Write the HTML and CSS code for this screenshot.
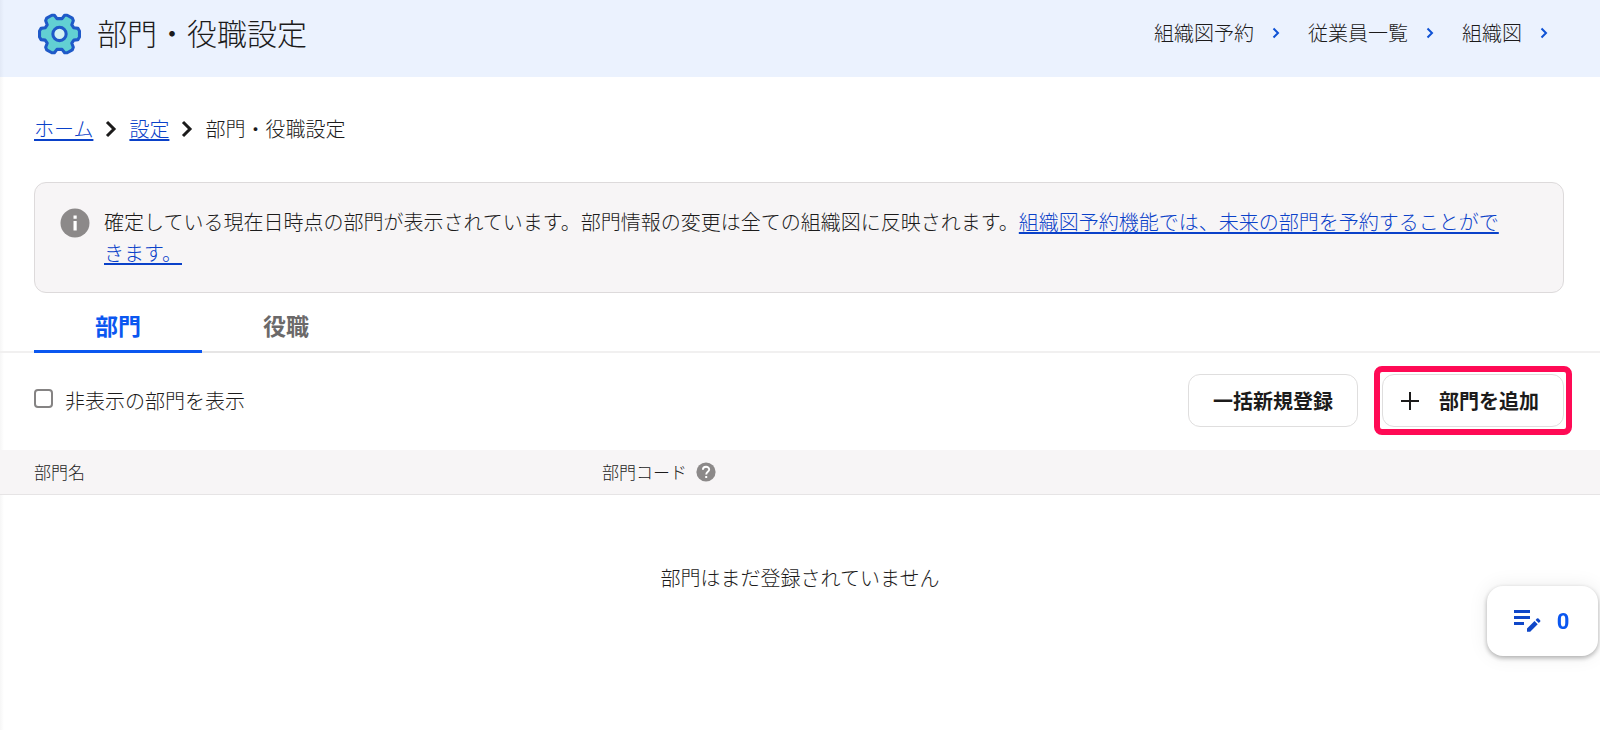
FILE: index.html
```
<!DOCTYPE html>
<html lang="ja">
<head>
    <meta charset="UTF-8">
    <meta name="viewport" content="width=device-width, initial-scale=1.0">
    <title>部門・役職設定</title>
    <link rel="stylesheet" href="styles.css">
</head>
<body>
    <header class="page-header">
        <div class="page-title">
            <svg class="gear" viewBox="0 0 42 42" aria-hidden="true">
                <path d="M13.500 2.200 L16 2.200 L18.500 5.500 L23.500 5.500 L26 2.200 L28.500 2.200 L33.500 5 L34.500 7.500 L33 11.500 L35 14.500 L39 15 L40.500 17.500 L40.500 23.500 L39 26 L35 26.500 L33 29.500 L34.500 33.500 L33.500 36 L28.500 38.800 L26 38.800 L23.500 35.500 L18.500 35.500 L16 38.800 L13.500 38.800 L8.500 36 L7.500 33.500 L9 29.500 L7 26.500 L3 26 L1.500 23.500 L1.500 17.500 L3 15 L7 14.500 L9 11.500 L7.500 7.500 L8.500 5 Z" fill="#62d0d3" stroke="#1f5ac8" stroke-width="3" stroke-linejoin="round"/>
                <circle cx="21" cy="20.500" r="6.500" fill="#d4f2f3" stroke="#1f5ac8" stroke-width="3"/>
            </svg>
            <h1>部門・役職設定</h1>
        </div>
        <nav class="header-links">
            <a href="#">組織図予約<svg viewBox="0 0 8 12" aria-hidden="true"><path d="M1.500 1.500 6 6l-4.500 4.500"/></svg></a>
            <a href="#">従業員一覧<svg viewBox="0 0 8 12" aria-hidden="true"><path d="M1.500 1.500 6 6l-4.500 4.500"/></svg></a>
            <a href="#">組織図<svg viewBox="0 0 8 12" aria-hidden="true"><path d="M1.500 1.500 6 6l-4.500 4.500"/></svg></a>
        </nav>
    </header>

    <main>
        <nav class="breadcrumb" aria-label="パンくずリスト">
            <a href="#">ホーム</a>
            <svg viewBox="0 0 12 18" aria-hidden="true"><path d="M2 2l7 7-7 7"/></svg>
            <a href="#">設定</a>
            <svg viewBox="0 0 12 18" aria-hidden="true"><path d="M2 2l7 7-7 7"/></svg>
            <span>部門・役職設定</span>
        </nav>

        <div class="notice">
            <svg class="notice-icon" viewBox="0 0 30 30" aria-hidden="true">
                <circle cx="15" cy="15" r="14.500" fill="#8c8989"/>
                <path d="M13.500 7.500h3.200v3.200h-3.200zM13.500 13h3.200v9.500h-3.200z" fill="#fff"/>
            </svg>
            <p>確定している現在日時点の部門が表示されています。部門情報の変更は全ての組織図に反映されます。<a href="#">組織図予約機能では、未来の部門を予約することができます。</a></p>
        </div>

        <div class="tabs" role="tablist">
            <button type="button" class="tab active" role="tab" aria-selected="true">部門</button>
            <button type="button" class="tab" role="tab" aria-selected="false">役職</button>
        </div>

        <div class="toolbar">
            <label class="check" for="showHidden">
                <input type="checkbox" id="showHidden">
                非表示の部門を表示
            </label>
            <div class="actions">
                <button type="button" class="btn">一括新規登録</button>
                <div class="highlight">
                    <button type="button" class="btn btn-add">
                        <svg viewBox="0 0 18 18" aria-hidden="true"><path d="M9 0v18M0 9h18"/></svg>
                        部門を追加
                    </button>
                </div>
            </div>
        </div>

        <table class="dept-table">
            <thead>
                <tr>
                    <th class="col-name">部門名</th>
                    <th>
                        <div class="th-help">
                            部門コード
                            <svg viewBox="0 0 20 20" aria-hidden="true">
                                <circle cx="10" cy="10" r="9.600" fill="#8c8989"/>
                                <path d="M6.900 7.800c0-4.200 6.300-4 6.300-.3 0 2.200-3 2.500-3 4.900" fill="none" stroke="#fff" stroke-width="1.900"/>
                                <path d="M9.200 14h2v2h-2z" fill="#fff"/>
                            </svg>
                        </div>
                    </th>
                </tr>
            </thead>
            <tbody>
                <tr>
                    <td class="empty" colspan="2">部門はまだ登録されていません</td>
                </tr>
            </tbody>
        </table>
    </main>

    <button type="button" class="float-memo">
        <svg viewBox="0 0 28 24" aria-hidden="true">
            <path d="M1 1h16v3H1zM1 7h16v3H1zM1 13h10v3H1z"/>
            <path d="M14 19.500 21.500 12l3.200 3.200-7.500 7.500H14zM22.600 10.900l1.300-1.300q.8-.8 1.600 0l1.600 1.600q.8.8 0 1.600l-1.300 1.300z"/>
        </svg>
        <span>0</span>
    </button>
</body>
</html>
```
FILE: styles.css
```
/* 部門・役職設定 */
* {
    box-sizing: border-box;
}

body {
    margin: 0;
    min-height: 100vh;
    font-family: "Noto Sans CJK JP", sans-serif;
    font-size: 20px;
    font-weight: 300;
    line-height: 31px;
    color: #1c1b1b;
    background: linear-gradient(to right, #f6f6f6, #fff 4px);
}

h1,
p {
    margin: 0;
}

button {
    font-family: inherit;
    cursor: pointer;
}

a {
    color: #0a41c9;
    text-decoration-thickness: 2px;
    text-underline-offset: 2px;
}

/* ヘッダー */
.page-header {
    display: flex;
    justify-content: space-between;
    align-items: center;
    height: 77px;
    padding: 0 52px 12px 38px;
    background: linear-gradient(to right, #e2e9f6, #ebf2fe 4px);
}

.page-title {
    display: flex;
    align-items: flex-end;
    gap: 16px;
}

.page-title h1 {
    padding-bottom: 2px;
    font-size: 30px;
    font-weight: 300;
    line-height: 44px;
}

.gear {
    width: 43px;
    height: 43px;
}

.header-links {
    display: flex;
    gap: 28px;
}

.header-links a {
    display: flex;
    align-items: center;
    gap: 18px;
    color: #1c1b1b;
    text-decoration: none;
}

.header-links svg {
    width: 8px;
    height: 12px;
    fill: none;
    stroke: #0f52d5;
    stroke-width: 2;
}

/* パンくず */
.breadcrumb {
    display: flex;
    align-items: center;
    gap: 12px;
    padding: 36px 34px 38px;
}

.breadcrumb svg {
    width: 12px;
    height: 18px;
    fill: none;
    stroke: #1c1b1b;
    stroke-width: 3;
}

/* お知らせ */
.notice {
    display: flex;
    gap: 14px;
    margin: 0 36px 0 34px;
    padding: 23px 48px 24px 25px;
    background-color: #f7f5f6;
    border: 1px solid #dddadb;
    border-radius: 12px;
}

.notice-icon {
    flex: none;
    width: 30px;
    height: 30px;
    margin-top: 2px;
}

/* タブ */
.tabs {
    display: flex;
    padding: 0 34px;
    border-bottom: 2px solid #f1f0f0;
}

.tab {
    width: 168px;
    height: 60px;
    margin-bottom: -2px;
    padding: 6px 0 0;
    border: 0;
    border-bottom: 2px solid #e6e5e5;
    background: none;
    font-size: 23px;
    font-weight: bold;
    color: #6b6969;
}

.tab.active {
    border-bottom: 3px solid #0b57f0;
    color: #0b57f0;
}

/* 操作 */
.toolbar {
    display: flex;
    justify-content: space-between;
    align-items: center;
    padding: 21px 36px 23px 34px;
}

.check {
    display: flex;
    align-items: center;
    gap: 12px;
}

.check input {
    appearance: none;
    width: 19px;
    height: 19px;
    margin: 0 0 4px;
    border: 2px solid #858383;
    border-radius: 4px;
    background-color: #fff;
}

.check input:checked {
    background-color: #0b57f0;
}

.actions {
    display: flex;
    gap: 24px;
}

.btn {
    display: flex;
    align-items: center;
    gap: 20px;
    height: 53px;
    padding: 0 24px;
    border: 1px solid #dfdede;
    border-radius: 12px;
    background-color: #fff;
    font-size: 20px;
    font-weight: bold;
    color: #1c1b1b;
}

.btn-add {
    padding: 0 24px 0 18px;
}

.btn-add svg {
    width: 18px;
    height: 18px;
    stroke: #1c1b1b;
    stroke-width: 2;
}

.highlight {
    position: relative;
}

.highlight::after {
    content: "";
    position: absolute;
    inset: -8px;
    border: 6px solid #ff0a55;
    border-radius: 8px;
    pointer-events: none;
}

/* 部門一覧 */
.dept-table {
    width: 100%;
    border-collapse: collapse;
    table-layout: fixed;
}

.dept-table thead {
    background-color: #f7f5f6;
}

.dept-table th {
    height: 44px;
    padding: 0;
    border-bottom: 1px solid #e6e4e5;
    font-size: 17px;
    font-weight: 300;
    line-height: 24px;
    text-align: left;
}

.dept-table .col-name {
    width: 602px;
    padding-left: 34px;
}

.th-help {
    display: flex;
    align-items: center;
    gap: 9px;
}

.th-help svg {
    width: 20px;
    height: 20px;
}

.empty {
    padding: 67px 34px;
    text-align: center;
}

/* 右下のメモボタン */
.float-memo {
    position: fixed;
    right: 2px;
    bottom: 74px;
    display: flex;
    align-items: center;
    justify-content: center;
    gap: 16px;
    width: 111px;
    height: 70px;
    padding: 0 3px 0 0;
    border: 0;
    border-radius: 16px;
    background-color: #fff;
    box-shadow: 0 2px 5px rgba(0,0,0,0.3), 0 0 20px rgba(0,0,0,0.08);
    font-family: Roboto, sans-serif;
    font-size: 22px;
    font-weight: bold;
    color: #0b57f0;
}

.float-memo svg {
    width: 28px;
    height: 24px;
    fill: #0f47c8;
}
```
